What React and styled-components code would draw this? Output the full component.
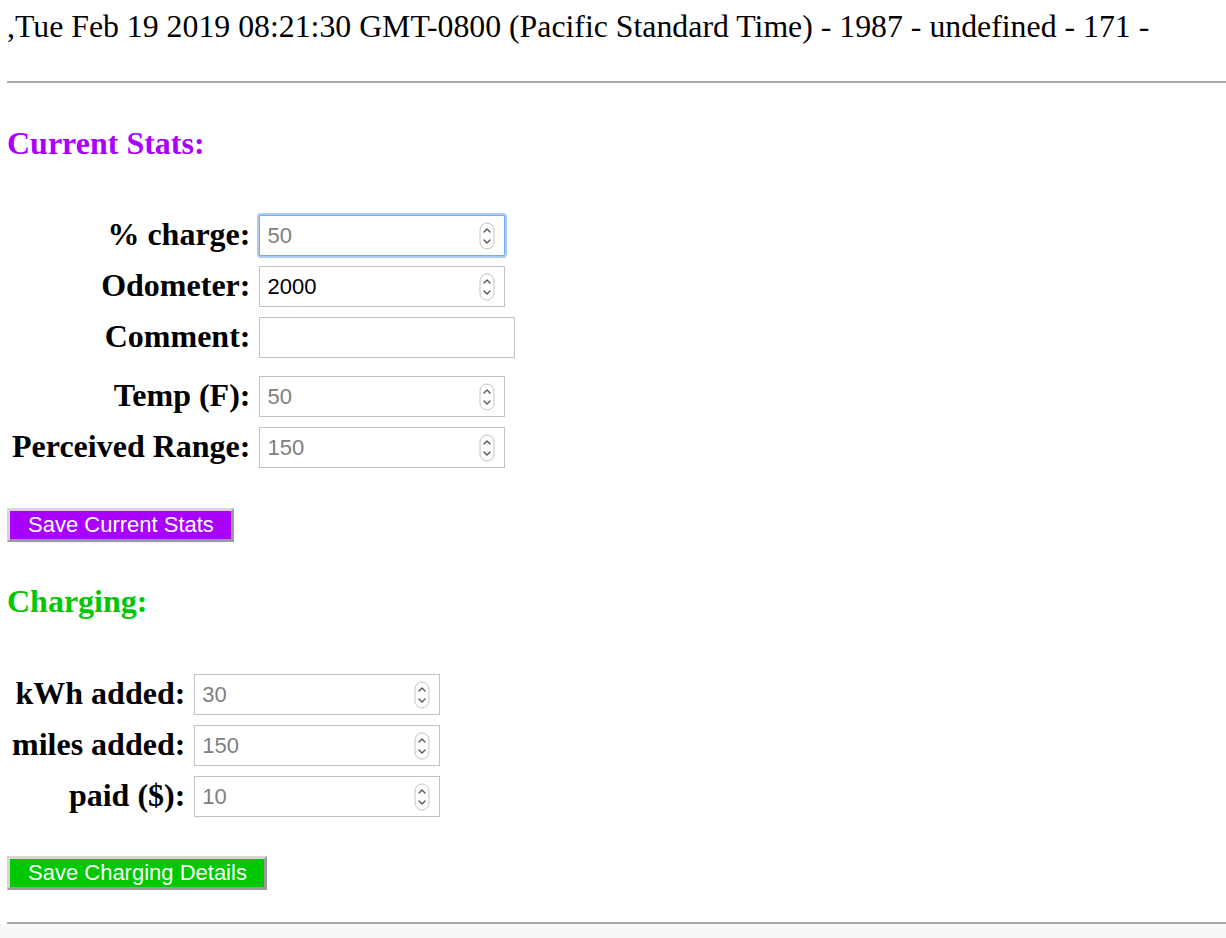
import React from "react"
import styled, { createGlobalStyle } from "styled-components"

const GlobalStyle = createGlobalStyle`
  html, body {
    margin: 0;
    padding: 0;
    background: #fff;
  }
  body {
    font-family: "Liberation Serif", "Times New Roman", serif;
    color: #000;
  }
`

const Page = styled.div`
  padding-left: 7px;
  min-height: 938px;
  display: flex;
  flex-direction: column;
`

const Stamp = styled.div`
  margin-top: 9px;
  font-size: 31.8px;
  line-height: 36px;
  white-space: nowrap;
`

const Rule = styled.div`
  height: 2px;
  background: #a9a9a9;
  margin-top: ${(p) => p.$top}px;
`

const SectionTitle = styled.h3`
  margin: ${(p) => p.$top}px 0 0 0;
  font-size: 32px;
  line-height: 36px;
  font-weight: bold;
  color: ${(p) => p.$color};
`

const Form = styled.div`
  display: grid;
  grid-template-columns: max-content max-content;
  column-gap: 9px;
  row-gap: 10px;
  align-items: start;
  margin: ${(p) => p.$top}px 0 0 5px;
`

const Label = styled.label`
  font-size: 32px;
  font-weight: bold;
  line-height: 38px;
  text-align: right;
  white-space: nowrap;
  margin-bottom: ${(p) => p.$after || 0}px;
`

const Field = styled.div`
  display: flex;
  align-items: center;
  box-sizing: border-box;
  width: ${(p) => (p.$wide ? 256 : 246)}px;
  height: 41px;
  padding: 0 9px 0 7px;
  border: 1px solid ${(p) => (p.$focused ? "#79a9ee" : "#c2c2c2")};
  box-shadow: ${(p) => (p.$focused ? "0 0 0 2px #a9cbf7" : "none")};
  border-radius: ${(p) => (p.$focused ? "2px" : "0")};
  background: #fff;
  margin-bottom: ${(p) => p.$after || 0}px;
`

const Input = styled.input`
  flex: 1;
  min-width: 0;
  border: none;
  outline: none;
  padding: 0;
  background: transparent;
  font-family: "Liberation Sans", Arial, sans-serif;
  font-size: 22px;
  color: #000;

  &::placeholder {
    color: #808080;
    opacity: 1;
  }
`

const SaveButton = styled.button`
  align-self: flex-start;
  margin-top: ${(p) => p.$top}px;
  height: 34px;
  padding: 0 17px 0 18px;
  background: ${(p) => p.$bg};
  color: #fff;
  font-family: "Liberation Sans", Arial, sans-serif;
  font-size: 22px;
  line-height: 26px;
  border: 3px solid;
  border-color: #d6d6d6 #9a9a9a #9a9a9a #d6d6d6;
  border-radius: 0;
  cursor: pointer;
  white-space: nowrap;
`

const Footer = styled.div`
  flex: 1;
  background: #f7f7f7;
  margin-left: -7px;
`

const Spinner = () => (
  <svg width="16" height="28" viewBox="0 0 16 28">
    <rect x="1" y="1" width="14" height="26" rx="7" fill="#fff" stroke="#c4c4c4" />
    <path d="M5 10 L8 7 L11 10" fill="none" stroke="#555" strokeWidth="1.4" strokeLinecap="round" strokeLinejoin="round" />
    <path d="M5 18 L8 21 L11 18" fill="none" stroke="#555" strokeWidth="1.4" strokeLinecap="round" strokeLinejoin="round" />
  </svg>
)

const NumberField = ({ placeholder, value, focused, after }) => (
  <Field $focused={focused} $after={after}>
    <Input type="text" placeholder={placeholder} defaultValue={value} />
    <Spinner />
  </Field>
)

const App = () => {
  return (
    <>
      <GlobalStyle />
      <Page>
        <Stamp>,Tue Feb 19 2019 08:21:30 GMT-0800 (Pacific Standard Time) - 1987 - undefined - 171 -</Stamp>
        <Rule $top={36} />

        <SectionTitle $top={42} $color="#aa00ff">Current Stats:</SectionTitle>
        <Form $top={54}>
          <Label>% charge:</Label>
          <NumberField placeholder="50" focused />
          <Label>Odometer:</Label>
          <NumberField value="2000" />
          <Label $after={8}>Comment:</Label>
          <Field $wide $after={8}>
            <Input type="text" />
          </Field>
          <Label>Temp (F):</Label>
          <NumberField placeholder="50" />
          <Label>Perceived Range:</Label>
          <NumberField placeholder="150" />
        </Form>
        <SaveButton $top={40} $bg="#aa00ff">Save Current Stats</SaveButton>

        <SectionTitle $top={41} $color="#00c800">Charging:</SectionTitle>
        <Form $top={55}>
          <Label>kWh added:</Label>
          <NumberField placeholder="30" />
          <Label>miles added:</Label>
          <NumberField placeholder="150" />
          <Label>paid ($):</Label>
          <NumberField placeholder="10" />
        </Form>
        <SaveButton $top={39} $bg="#00c800">Save Charging Details</SaveButton>

        <Rule $top={32} />
        <Footer />
      </Page>
    </>
  )
}

export default App
